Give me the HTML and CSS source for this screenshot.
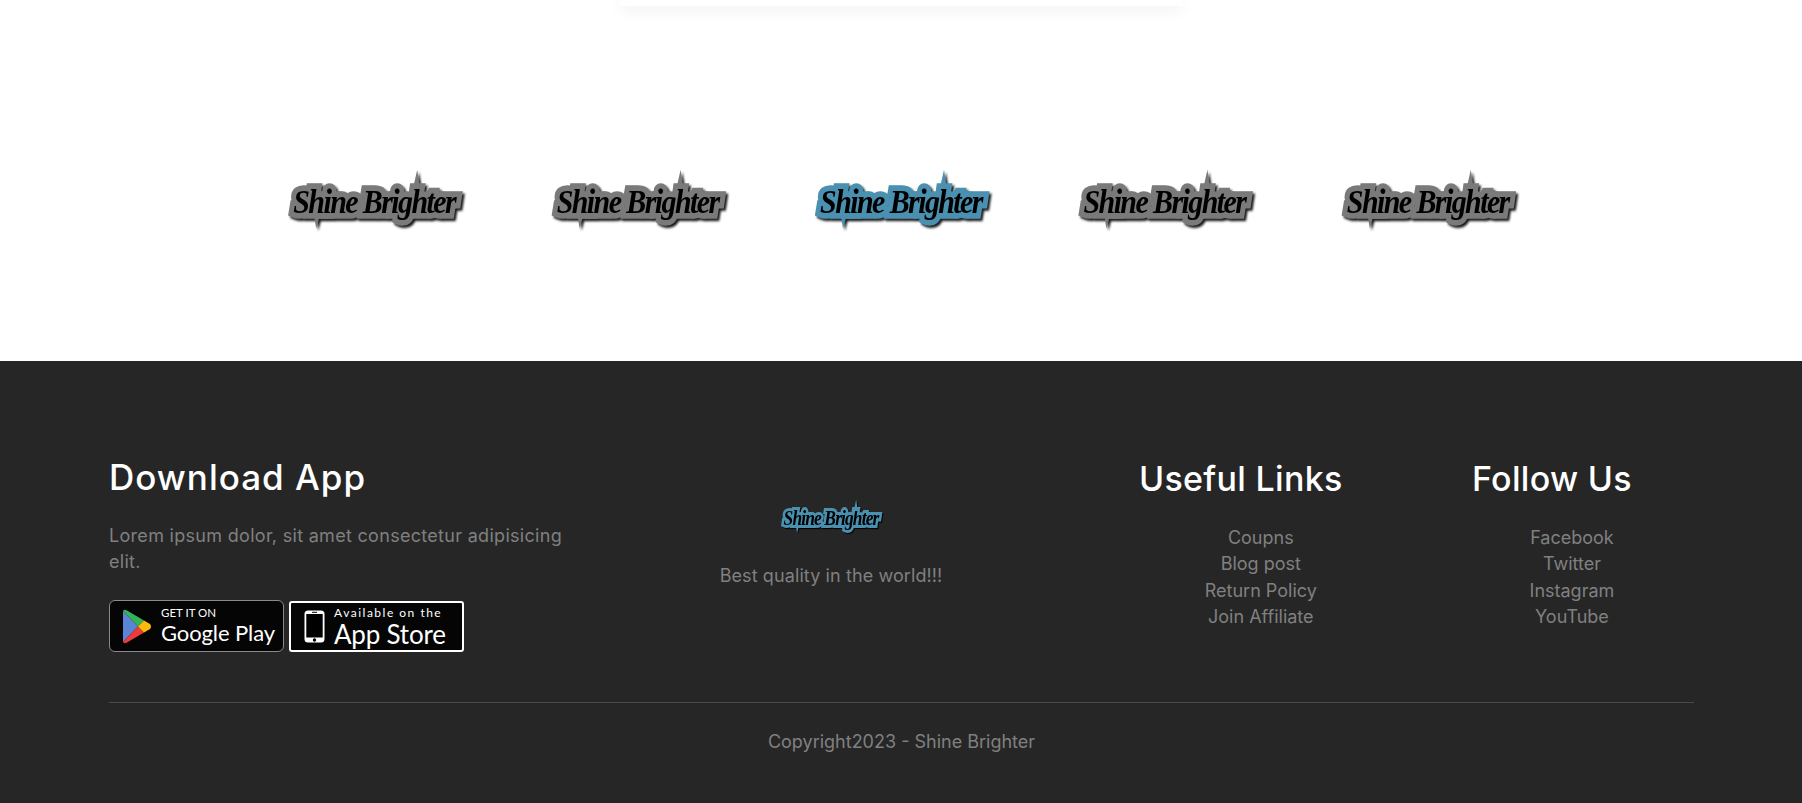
FILE: index.html
```html
<!DOCTYPE html>
<html lang="en">
<head>
<meta charset="utf-8">
<title>Shine Brighter</title>
<link rel="stylesheet" href="styles.css">
</head>
<body>
<div class="card"></div>
<section class="brands">
  <div class="brand"><span class="logo">Shine Brighter</span></div>
  <div class="brand"><span class="logo">Shine Brighter</span></div>
  <div class="brand"><span class="logo logo-blue">Shine Brighter</span></div>
  <div class="brand"><span class="logo">Shine Brighter</span></div>
  <div class="brand"><span class="logo">Shine Brighter</span></div>
</section>
<footer class="footer">
  <div class="columns">
    <div class="col-app">
      <h3 class="app-title">Download App</h3>
      <p class="lead">Lorem ipsum dolor, sit amet consectetur adipisicing elit.</p>
      <div class="badges">
        <div class="badge badge-play">
          <svg class="play-icon" viewBox="0 0 30 35" width="30" height="35">
            <path d="M1 2 L1 33 L16 17.5 Z" fill="#5b84d6"/>
            <path d="M1 2 Q2 0 5 1.5 L22 11.5 L16 17.5 Z" fill="#35b35a"/>
            <path d="M1 33 Q2 35 5 33.5 L22 23.5 L16 17.5 Z" fill="#ee3a38"/>
            <path d="M22 11.5 L28 15 Q30 17.5 28 20 L22 23.5 L16 17.5 Z" fill="#fbbc09"/>
          </svg>
          <div class="badge-text">
            <span class="play-small">GET IT ON</span>
            <span class="play-big">Google Play</span>
          </div>
        </div>
        <div class="badge badge-apple">
          <svg class="phone-icon" viewBox="0 0 21 33" width="21" height="33">
            <rect x="0.5" y="0.5" width="20" height="32" rx="3.5" fill="#fff"/>
            <rect x="2.3" y="4" width="16.4" height="23.5" fill="#000"/>
            <rect x="8" y="1.8" width="5" height="1" fill="#000"/>
            <circle cx="10.5" cy="30" r="1.7" fill="#000"/>
          </svg>
          <div class="badge-text">
            <span class="apple-small">Available on the</span>
            <span class="apple-big">App Store</span>
          </div>
        </div>
      </div>
    </div>
    <div class="col-brand">
      <span class="logo logo-blue logo-small">Shine Brighter</span>
      <p class="tagline">Best quality in the world!!!</p>
    </div>
    <div class="col-links col-useful">
      <div class="links-block">
        <h3 class="links-title">Useful Links</h3>
        <ul class="links">
          <li>Coupns</li>
          <li>Blog post</li>
          <li>Return Policy</li>
          <li>Join Affiliate</li>
        </ul>
      </div>
    </div>
    <div class="col-links">
      <div class="links-block">
        <h3 class="links-title">Follow Us</h3>
        <ul class="links">
          <li>Facebook</li>
          <li>Twitter</li>
          <li>Instagram</li>
          <li>YouTube</li>
        </ul>
      </div>
    </div>
  </div>
  <hr class="rule">
  <p class="copyright">Copyright2023 - Shine Brighter</p>
</footer>
</body>
</html>
```
FILE: styles.css
```css
* { box-sizing: border-box; }
html, body { margin: 0; padding: 0; }
body {
  background: #fff;
  font-family: Inter, "Open Sans", sans-serif;
  height: 803px;
  overflow: hidden;
}
.card {
  width: 563px;
  height: 6px;
  margin: 0 auto;
  background: #fff;
  box-shadow: 0 3px 14px rgba(0, 0, 0, 0.09);
}
.brands {
  width: 1317px;
  height: 355px;
  margin: 0 auto;
  display: grid;
  grid-template-columns: repeat(5, 1fr);
  align-items: start;
  padding-top: 174px;
}
.brand { display: flex; justify-content: center; }
.logo {
  position: relative;
  display: inline-block;
  font-family: "Liberation Serif", serif;
  font-style: italic;
  font-weight: 700;
  font-size: 30px;
  line-height: 44px;
  letter-spacing: -1.6px;
  color: #000;
  white-space: nowrap;
  -webkit-text-stroke: 10px #7a7a7a;
  paint-order: stroke fill;
  transform: scaleY(1.15);
  filter: drop-shadow(2px 2px 1px rgba(0, 0, 0, 0.9));
}
.logo::before {
  content: "";
  position: absolute;
  left: 74%;
  top: -6px;
  width: 7px;
  height: 16px;
  background: #7a7a7a;
  clip-path: polygon(60% 0, 100% 100%, 0 100%);
}
.logo::after {
  content: "";
  position: absolute;
  left: 13%;
  bottom: -1px;
  width: 5px;
  height: 10px;
  background: #7a7a7a;
  clip-path: polygon(0 0, 100% 0, 40% 100%);
}
.logo-blue { -webkit-text-stroke-color: #4a90b0; }
.logo-blue::before,
.logo-blue::after { background: #4a90b0; }
.logo-small {
  font-size: 17.5px;
  line-height: 28px;
  letter-spacing: -0.9px;
  -webkit-text-stroke-width: 5px;
  filter: drop-shadow(1px 1px 0.5px rgba(0, 0, 0, 0.9));
}
.logo-small::before {
  top: -2px;
  width: 4px;
  height: 10px;
}
.logo-small::after {
  bottom: 1px;
  width: 3px;
  height: 6px;
}
.footer {
  height: 442px;
  background: #262626;
  padding: 0 108px 0 109px;
}
.columns {
  display: grid;
  grid-template-columns: 475px 494px 394px auto;
  height: 341px;
}
.col-app { padding-top: 93px; }
.app-title {
  margin: 0;
  color: #fff;
  font-weight: 500;
  font-size: 35px;
  line-height: 46px;
  letter-spacing: 1px;
}
.lead {
  margin: 23px 0 0;
  color: #808080;
  font-size: 18px;
  line-height: 26px;
  letter-spacing: 0.3px;
}
.badges {
  display: flex;
  gap: 5px;
  margin-top: 25px;
}
.badge {
  width: 175px;
  height: 52px;
  background: #050505;
  color: #fff;
  display: flex;
  align-items: center;
}
.badge-play {
  border: 1px solid #8a8a8a;
  border-radius: 6px;
  padding-left: 12px;
  gap: 9px;
}
.badge-apple {
  margin-top: 1px;
  height: 51px;
  border: 2px solid #fff;
  border-radius: 3px;
  padding-left: 13px;
  gap: 9px;
}
.badge-text { display: flex; flex-direction: column; }
.play-small {
  font-family: Lato, sans-serif;
  font-size: 11.5px;
  line-height: 13px;
}
.play-big {
  font-family: Lato, sans-serif;
  font-size: 22px;
  line-height: 27px;
  letter-spacing: -0.1px;
}
.apple-small {
  font-family: Lato, sans-serif;
  font-size: 12px;
  line-height: 14px;
  letter-spacing: 1.5px;
}
.apple-big {
  font-family: Lato, sans-serif;
  font-size: 26px;
  line-height: 28px;
  letter-spacing: -0.2px;
}
.col-brand {
  padding-top: 143px;
  text-align: center;
}
.tagline {
  margin: 31px 0 0;
  color: #808080;
  font-size: 18px;
  line-height: 26px;
  letter-spacing: 0.1px;
}
.col-useful { padding-left: 61px; }
.col-links { padding-top: 95px; }
.links-block { width: fit-content; }
.links-title {
  margin: 0;
  color: #fff;
  font-weight: 500;
  font-size: 34px;
  line-height: 46px;
  letter-spacing: 0.3px;
  white-space: nowrap;
}
.links {
  list-style: none;
  margin: 23px 0 0;
  padding: 0 0 0 40px;
  text-align: center;
  color: #808080;
  font-size: 18px;
  line-height: 26.4px;
}
.rule {
  margin: 0;
  border: 0;
  border-top: 1px solid #4a4a4a;
}
.copyright {
  margin: 26px 0 0;
  text-align: center;
  color: #808080;
  font-size: 18px;
  line-height: 26px;
}
```
